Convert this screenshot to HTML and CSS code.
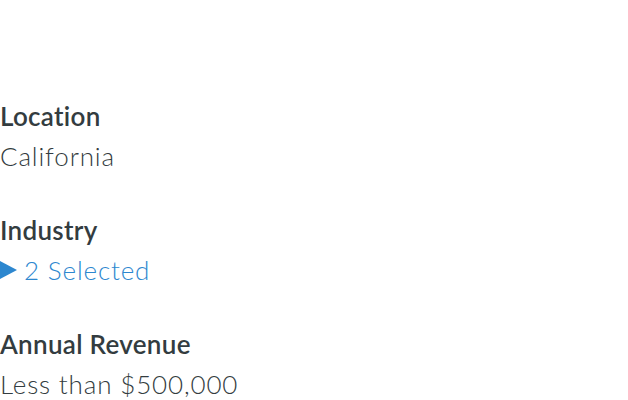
FILE: index.html
```html
<!DOCTYPE html>
<html>
<head>
<meta charset="utf-8">
<link rel="stylesheet" href="styles.css">
</head>
<body>
<div class="filters">
  <div class="group">
    <div class="label">Location</div>
    <div class="value">California</div>
  </div>
  <div class="group">
    <div class="label">Industry</div>
    <div class="value link"><svg class="caret" width="17" height="18" viewBox="0 0 17 18"><path d="M0 0 L17 9 L0 18 Z" fill="currentColor"/></svg><span>2 Selected</span></div>
  </div>
  <div class="group">
    <div class="label">Annual Revenue</div>
    <div class="value">Less than $500,000</div>
  </div>
</div>
</body>
</html>
```
FILE: styles.css
```css
html, body {
  margin: 0;
  padding: 0;
  background: #ffffff;
}
body {
  font-family: Lato, "Liberation Sans", sans-serif;
  color: #333c40;
}
.filters {
  display: flex;
  flex-direction: column;
  gap: 34px;
  padding-top: 96px;
}
.group {
  display: flex;
  flex-direction: column;
}
.label {
  font-size: 26px;
  line-height: 40px;
  font-weight: 600;
  letter-spacing: 0.3px;
}
.value {
  font-size: 26px;
  line-height: 40px;
  font-weight: 300;
  letter-spacing: 0.85px;
}
.link {
  color: #2d87cf;
  display: flex;
  align-items: center;
  gap: 7px;
}
.caret {
  display: block;
}
```
